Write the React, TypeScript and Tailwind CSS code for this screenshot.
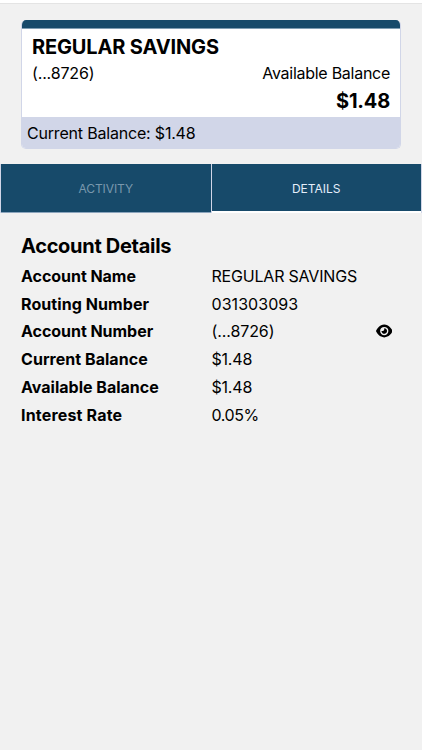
import { useState } from "react";
import { FaEye } from "react-icons/fa6";

interface Detail {
  label: string;
  value: string;
  labelClass: string;
  valueClass: string;
  canReveal?: boolean;
}

const details: Detail[] = [
  { label: "Account Name", value: "REGULAR SAVINGS", labelClass: "tracking-[-0.04px]", valueClass: "tracking-[-0.2px]" },
  { label: "Routing Number", value: "031303093", labelClass: "tracking-[0.08px]", valueClass: "tracking-[0.05px]" },
  { label: "Account Number", value: "(...8726)", labelClass: "tracking-[-0.04px]", valueClass: "tracking-[-0.1px]", canReveal: true },
  { label: "Current Balance", value: "$1.48", labelClass: "tracking-[0.04px]", valueClass: "tracking-[-0.2px]" },
  { label: "Available Balance", value: "$1.48", labelClass: "", valueClass: "tracking-[-0.2px]" },
  { label: "Interest Rate", value: "0.05%", labelClass: "tracking-[0.18px]", valueClass: "tracking-[-0.4px]" },
];

function AccountCard() {
  return (
    <section className="mx-[21px] mt-4 h-[129px] overflow-hidden rounded-[5px] border border-[#d1d6e8] border-t-0 bg-white">
      <div className="h-[9px] border-b border-[#7f9db2] bg-[#174a6a]" />
      <div className="h-[88px] px-2.5 pt-[5px]">
        <h1 className="text-[20px] font-bold leading-[26px] tracking-[-0.15px]">
          <span>REGULAR SAVINGS</span>
        </h1>
        <div className="flex justify-between leading-[26px]">
          <span className="tracking-[-0.15px]">(...8726)</span>
          <span className="tracking-[-0.27px]">Available Balance</span>
        </div>
        <p className="pt-0.5 text-right text-[20px] font-bold leading-[26px] tracking-[-0.2px]">
          <span>$1.48</span>
        </p>
      </div>
      <div className="h-8 bg-[#d1d6e8] px-[5px] leading-8 tracking-[-0.19px]">
        <span>Current Balance: $1.48</span>
      </div>
    </section>
  );
}

export default function App() {
  const [tab, setTab] = useState("details");

  return (
    <div className="min-h-[750px] bg-[#f1f1f1] font-['Inter',sans-serif] text-[16px] text-black">
      <div className="h-1 border-b border-[#e4e4e4] bg-white" />
      <AccountCard />

      <nav className="mt-[15px] flex h-[49px] gap-px bg-[#d1d6e8] px-px text-[12px]">
        <button
          type="button"
          onClick={() => setTab("activity")}
          className={`w-[209.5px] border-b pt-px ${
            tab === "activity"
              ? "border-white bg-[#174a6a] text-[#d9e7f8]"
              : "border-[#8ca5bd] bg-[#174a6a] text-[#7998ad]"
          }`}
        >
          <span className="tracking-[-0.1px]">ACTIVITY</span>
        </button>
        <button
          type="button"
          onClick={() => setTab("details")}
          className={`flex-1 border-b-2 pt-0.5 ${
            tab === "details"
              ? "border-white bg-[#174a6a] text-[#e4eefa]"
              : "border-[#8ca5bd] bg-[#174a6a] text-[#7998ad]"
          }`}
        >
          <span>DETAILS</span>
        </button>
      </nav>

      <main className="px-[21px] pt-[19px]">
        <h2 className="text-[20px] font-bold leading-[28px] tracking-[-0.3px]">
          <span>Account Details</span>
        </h2>
        <dl className="mt-[2px]">
          {details.map((item) => (
            <div key={item.label} className="flex h-[27.8px] items-center">
              <dt className="w-[190.5px] font-bold">
                <span className={item.labelClass}>{item.label}</span>
              </dt>
              <dd className="flex flex-1 items-center justify-between pr-[9px]">
                <span className={item.valueClass}>{item.value}</span>
                {item.canReveal && (
                  <button type="button" aria-label="Show account number">
                    <FaEye className="h-4 w-[16.5px]" />
                  </button>
                )}
              </dd>
            </div>
          ))}
        </dl>
      </main>
    </div>
  );
}
